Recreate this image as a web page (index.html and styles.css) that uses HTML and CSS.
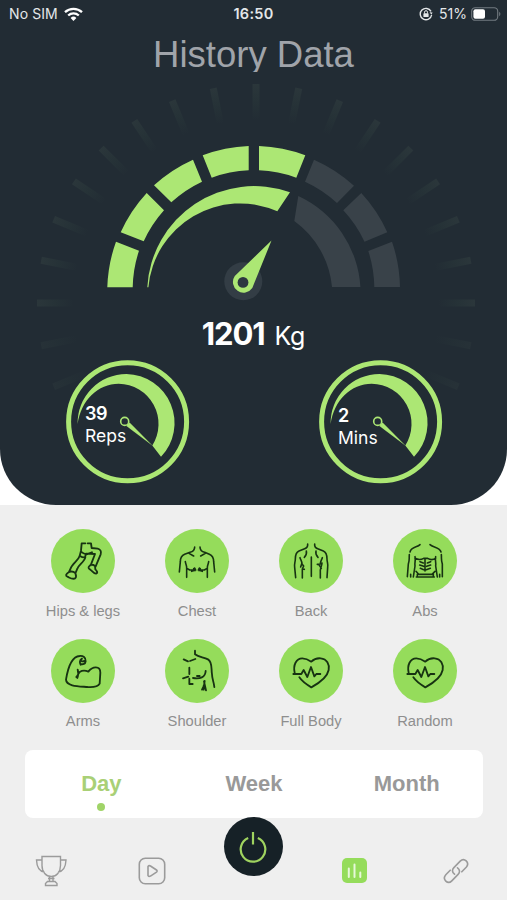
FILE: index.html
```html
<!DOCTYPE html>
<html lang="en">
<head>
  <meta charset="UTF-8">
  <meta name="viewport" content="width=device-width, initial-scale=1.0">
  <title>History Data</title>
  <link rel="stylesheet" href="styles.css">
</head>
<body>
  <section class="hero">
    <svg class="ticks" viewBox="0 0 507 505">
      <defs>
        <linearGradient id="tickFade" gradientUnits="userSpaceOnUse" x1="36" y1="0" x2="74" y2="0">
          <stop offset="0" stop-color="#2e3a3d"/>
          <stop offset="0.5" stop-color="#273438"/>
          <stop offset="1" stop-color="#222c34"/>
        </linearGradient>
      </defs>
      <g id="ticks"></g>
    </svg>

    <header class="status">
      <div class="status-left">
        <span>No SIM</span>
        <svg width="19" height="14" viewBox="0 0 19 14" fill="none" stroke="#fff" stroke-width="2.3">
          <path d="M1 5.2a12.4 12.4 0 0 1 17 0"/>
          <path d="M4.2 8.5a7.8 7.8 0 0 1 10.6 0"/>
          <path d="M6.6 10.9a4.2 4.2 0 0 1 5.8 0L9.5 13.9z" fill="#fff" stroke="none"/>
        </svg>
      </div>
      <div class="status-time">16:50</div>
      <div class="status-right">
        <svg class="lock" width="14" height="14" viewBox="0 0 14 14" fill="none" stroke="#e4e7e9" stroke-width="1.4">
          <path d="M12 4.4a5.7 5.7 0 1 0 .6 3.6"/>
          <path d="M10.6 5.2l3 .4-1.2 2.2z" fill="#e4e7e9" stroke="none"/>
          <rect x="4.4" y="6.3" width="5.2" height="3.8" rx=".6" fill="#e4e7e9" stroke="none"/>
          <path d="M5.5 6.5V5.2a1.5 1.5 0 0 1 3 0v1.3" stroke-width="1"/>
        </svg>
        <span>51%</span>
        <svg width="30" height="14" viewBox="0 0 30 14">
          <rect x=".7" y=".7" width="26" height="12.6" rx="3.6" fill="none" stroke="#727a80" stroke-width="1.1"/>
          <rect x="2.4" y="2.3" width="11.6" height="9.4" rx="2" fill="#fff"/>
          <path d="M28.2 4.8c1.6.7 1.6 3.7 0 4.4z" fill="#727a80"/>
        </svg>
      </div>
    </header>

    <h1>History Data</h1>

    <svg class="gauge" viewBox="100 140 308 170">
      <g fill="#ace774">
        <path d="M107.3 287.3H132.7A122 122 0 0 1 139 250.7L116 241.7A147 147 0 0 0 107.3 287.3z"/>
        <path d="M120.7 232.3A147 147 0 0 1 146.7 193L164 210.3A122 122 0 0 0 143.7 241.3z"/>
        <path d="M154 185.3A147 147 0 0 1 193 159.7L202 181.7A122 122 0 0 0 171.3 202.3z"/>
        <path d="M202.7 155.3A147 147 0 0 1 248.7 146V170.3A122 122 0 0 0 211.7 177.7z"/>
        <path d="M305.3 155.3A147 147 0 0 0 259 146V170.3A122 122 0 0 1 296.3 177.7z"/>
        <path d="M147.3 287.3A107 107 0 0 1 290 192.3L277.3 211.3A92 92 0 0 0 148.4 287.3z"/>
      </g>
      <g fill="#394249">
        <path d="M314 159.7A147 147 0 0 1 354 185.8L337 203A122 122 0 0 0 305 181.7z"/>
        <path d="M361.3 193A147 147 0 0 1 387.3 232.3L364.5 241.7A122 122 0 0 0 343.3 210.3z"/>
        <path d="M392 241.7A147 147 0 0 1 400 287H374.3A122 122 0 0 0 368.3 251z"/>
        <path d="M298.3 196A107 107 0 0 1 360.4 287H332A92 92 0 0 0 294.3 221z"/>
      </g>
      <circle cx="243.3" cy="281.3" r="19" fill="#333d45"/>
      <path d="M271.5 240.5L234.8 276A10.6 10.6 0 1 0 252.3 288z" fill="#ace774"/>
      <circle cx="243" cy="282.4" r="5.4" fill="#2d3840"/>
    </svg>

    <div class="weight"><b>1201</b><span>Kg</span></div>

    <div class="dials">
      <div class="dial">
        <svg viewBox="65 359 125 125">
          <g id="dial">
            <circle cx="127.6" cy="421.8" r="59" fill="none" stroke="#ace774" stroke-width="5"/>
            <path d="M77.6 424A49 49 0 0 1 126.5 374A49 49 0 0 1 161 456.8L152.3 445.5A40.3 40.3 0 0 0 118.7 383.7C98 383.7 81 400 77.6 424z" fill="#ace774"/>
            <path d="M152.6 445.8L126.4 426 129.6 422.4z" fill="#ace774"/>
            <circle cx="124.7" cy="421.4" r="4" fill="#222c34" stroke="#ace774" stroke-width="1.6"/>
          </g>
        </svg>
        <div class="dial-text"><b>39</b><span>Reps</span></div>
      </div>
      <div class="dial">
        <svg viewBox="65 359 125 125"><use href="#dial"/></svg>
        <div class="dial-text low"><b>2</b><span>Mins</span></div>
      </div>
    </div>
  </section>

  <main>
    <div class="parts">
      <div class="part">
        <svg class="part-icon" viewBox="0 0 192 192">
          <path d="M92 43l-2 22-4 16M94 43h9M110 43h10l2 14 18 2c8 2 12 8 9 17l-15 36M90 68c12 10 20 10 33 2M86 80c6 4 10 6 16 5l3-11 27 1-13 34M86 80c-2 12-22 24-26 36l-6 13M103 85c-3 14-20 22-24 34l-6 14M54 129c-10 6-11 12-5 14 7 3 12 8 22 6 8-4 3-12 2-17-6-5-14-5-19-3zM117 109c-7 6-5 10 1 13 6 4 10 12 17 12 7-3 2-9-2-13l-1-10c-5-4-10-5-15-2z"/>
        </svg>
        <span>Hips &amp; legs</span>
      </div>
      <div class="part">
        <svg class="part-icon thin" viewBox="0 0 192 192">
          <path d="M89 54c0 10-6 14-14 16l-16 6c-9 4-13 12-13 22l-3 31M105 54c0 10 6 14 14 16l14 6c9 4 13 12 13 22l3 31M72 73l14 8M121 73l-14 8M61 98c1 8 4 10 4 18v29M131 98c-1 8-4 10-4 18v29M66 118l8 5h10M126 118l-8 5h-10M80 127l12-4-3-6M112 127l-12-4 3-6M86 119l4 6M106 119l-4 6"/>
        </svg>
        <span>Chest</span>
      </div>
      <div class="part">
        <svg class="part-icon thin" viewBox="0 0 192 192">
          <path d="M86 45c1 10-3 13-11 15l-15 6c-10 4-11 13-11 24 0 9-4 16-2 25l3 31M107 45c-1 10 3 13 11 15l15 6c10 4 11 13 11 24 0 9 4 16 2 25l-2 31M82 66c2 9-1 14-6 19M111 66c-2 9 1 14 6 19M63 86c2 7 6 10 6 19l5 6-4 9v27M130 86c-2 7-6 10-6 19l-9 1M129 102c-1 12-7 17-5 29v16M97 84v58M70 120l6 1M69 102l-4 12M119 106l8 12"/>
        </svg>
        <span>Back</span>
      </div>
      <div class="part">
        <svg class="part-icon thin" viewBox="0 0 192 192">
          <path d="M81 47c-8 8-27 7-30 22M49 77c-1 14 1 17-3 28l-3 38M111 47c8 8 30 8 33 22M145 77c1 14-1 17 3 28v38M66 83c3 10-2 18 0 28l-5 33M128 83c-3 10 2 18 0 28l5 33M66 88c10 5 18 5 26 0h12c8 5 16 5 24 0M69 127l8 9h40l9-9M96 90v36M81 98l10 4M113 98l-10 4M80 108l12 4M113 108l-12 4M82 118l10 4M112 118l-12 4M73 136v8M121 136v8M53 136v8M140 136v8M70 144h54"/>
        </svg>
        <span>Abs</span>
      </div>
      <div class="part">
        <svg class="part-icon" viewBox="0 0 192 192">
          <path d="M79 117c3-9 4-17 1-25M88 75c8 2 15 0 16-8 1-12-8-17-18-16C62 52 50 91 45 122c1 21 42 20 65 22 18 1 32-2 36-10l2-33c0-22-24-19-36-3-9-4-18-4-26 1-4 5-6 11-10 15M89 62c1 6 5 6 12 4M89 77c-4-6-3-14 4-18"/>
        </svg>
        <span>Arms</span>
      </div>
      <div class="part">
        <svg class="part-icon" viewBox="0 0 192 192">
          <path d="M90 35v11c12 9 25 8 39 15 14 8 9 28 12 45 0 14 6 24 7 38M56 61l13 6M75 66l16-6M73 86v19M73 119v16h10M54 118l16-5M84 117c21 3 37-1 38-21M119 126l-2 14-6 12M117 127l6 27M116 140v12M96 111h8"/>
        </svg>
        <span>Shoulder</span>
      </div>
      <div class="part">
        <svg class="part-icon" viewBox="0 0 192 192">
          <g id="heart">
            <path d="M47 101c-5-22 4-43 23-43 13 0 20 5 27 10 8-8 17-11 28-10 19 2 27 18 24 35-4 21-30 40-52 52-14-8-27-17-36-30"/>
            <path d="M43 105h24l7-12 11 21 11-30 10 28 6-7h12"/>
          </g>
        </svg>
        <span>Full Body</span>
      </div>
      <div class="part">
        <svg class="part-icon" viewBox="0 0 192 192"><use href="#heart"/></svg>
        <span>Random</span>
      </div>
    </div>

    <div class="tabs">
      <a class="tab active">Day</a>
      <a class="tab">Week</a>
      <a class="tab">Month</a>
    </div>

    <nav>
      <a>
        <svg width="32" height="32" viewBox="0 0 32 32" fill="none" stroke="#9b9b9b" stroke-width="1.4">
          <path d="M7 1.5h18.5v9c0 6.5-4 11-9.2 11S7 17 7 10.5zM7 5H1.5c.3 7 2.5 11.5 8 12M25.5 5H31c-.3 7-2.5 11.5-8 12M14.5 21.5v5M18 21.5v5M13 23.5h6.5M10.5 30.5v-2l2-2h7.5l2 2v2z"/>
        </svg>
      </a>
      <a>
        <svg width="28" height="28" viewBox="0 0 28 28" fill="none" stroke="#9b9b9b" stroke-width="1.6">
          <rect x="1.3" y="1.3" width="25.4" height="25.4" rx="6"/>
          <path d="M10 9.5v9c.5 1.3 1.5 1 2.5.6l6-4c.8-.6.8-1.500 0-2.100l-6-4c-1-.6-2-.6-2.500.5z"/>
        </svg>
      </a>
      <a class="power">
        <svg width="30" height="34" viewBox="0 0 30 34" fill="none" stroke="#9fd35f" stroke-width="2.2">
          <path d="M10.2 8A12.3 12.3 0 1 0 19.8 8M15 2v12.5"/>
        </svg>
      </a>
      <a>
        <svg width="25" height="25" viewBox="0 0 25 25" stroke="#e6f8d8" stroke-width="2" stroke-linecap="round">
          <rect width="25" height="25" rx="5" fill="#95dc5b" stroke="none"/>
          <path d="M6.8 10.5v8.5M12.5 6.500V19M18.300 14.500V19"/>
        </svg>
      </a>
      <a>
        <svg width="26" height="26" viewBox="0 0 26 26" fill="none" stroke="#9b9b9b" stroke-width="1.6" stroke-linecap="round">
          <path d="M11.5 16.2c-2.6-2-2.6-4.6-.6-6.6l6.3-6.500c4-4 10 1.500 6 6.200l-4.400 4.500"/>
          <path d="M14.5 9.8c2.6 2 2.6 4.600.6 6.600l-6.300 6.500c-4 4-10-1.500-6-6.200l4.400-4.500"/>
        </svg>
      </a>
    </nav>
  </main>

  <script>
    const ticks = document.getElementById('ticks');
    const step = 11.25;

    // faint marks fanned around the gauge, two of them below each end
    for (let i = -2; i <= 18; i++) {
      const tick = document.createElementNS('http://www.w3.org/2000/svg', 'rect');
      tick.setAttribute('x', 37);
      tick.setAttribute('y', 299.5);
      tick.setAttribute('width', 36);
      tick.setAttribute('height', 7);
      tick.setAttribute('fill', 'url(#tickFade)');
      tick.setAttribute('opacity', i < 0 || i > 16 ? 0.4 : 0.75);
      tick.setAttribute('transform', `rotate(${i * step} 256 303)`);
      ticks.appendChild(tick);
    }
  </script>
</body>
</html>
```
FILE: styles.css
```css
* {
  box-sizing: border-box;
}
body {
  margin: 0;
  height: 900px;
  overflow: hidden;
  background: #fff;
  font-family: "Liberation Sans", Arial, sans-serif;
}
svg {
  display: block;
}
.hero {
  position: relative;
  height: 505px;
  background: #222c34;
  border-radius: 0 0 56px 56px;
  color: #fff;
}
.ticks {
  position: absolute;
  top: 0;
  left: 0;
  width: 507px;
  height: 505px;
}

/* status bar */
.status {
  position: relative;
  display: grid;
  grid-template-columns: 1fr auto 1fr;
  align-items: center;
  height: 27px;
  padding: 0 6px 0 9px;
  font-family: Inter, sans-serif;
  font-size: 14px;
  color: #e4e7e9;
}
.status-left, .status-right {
  display: flex;
  align-items: center;
}
.status-left {
  gap: 6px;
  letter-spacing: 0.1px;
}
.status-right {
  justify-content: flex-end;
  gap: 4px;
}
.lock {
  margin-right: 2px;
}
.status-time {
  margin-right: 3px;
  font-weight: 600;
  font-size: 14.5px;
  letter-spacing: 0.3px;
}

h1 {
  position: relative;
  height: 45px;
  margin: 0;
  padding-top: 7px;
  overflow: hidden;
  text-align: center;
  font-size: 36.5px;
  line-height: 41px;
  font-weight: normal;
  color: #a0a4aa;
}
.gauge {
  position: relative;
  width: 308px;
  height: 170px;
  margin: 68px 0 0 100px;
}
.weight {
  position: relative;
  display: flex;
  align-items: baseline;
  justify-content: center;
  gap: 10px;
  height: 49px;
  line-height: 48px;
  font-family: Inter, sans-serif;
}
.weight b {
  font-size: 31px;
  font-weight: 700;
  letter-spacing: -1.1px;
}
.weight span {
  font-size: 25px;
  letter-spacing: -0.3px;
}
.dials {
  display: flex;
  justify-content: space-between;
  padding: 0 64px 0 65px;
}
.dial {
  position: relative;
  width: 125px;
  height: 125px;
}
.dial-text {
  position: absolute;
  left: 20px;
  top: 44px;
  display: flex;
  flex-direction: column;
  font-family: Inter, sans-serif;
  font-size: 18px;
  line-height: 22px;
}
.dial-text.low {
  top: 46px;
}
.dial-text b {
  font-weight: 600;
  letter-spacing: -0.5px;
}
.dial-text span {
  font-size: 17.5px;
}

main {
  height: 395px;
  padding-top: 24px;
  background: #efefef;
}
.parts {
  display: grid;
  grid-template-columns: repeat(4, 114px);
  grid-auto-rows: 110px;
  padding-left: 26px;
}
.part {
  display: flex;
  flex-direction: column;
  align-items: center;
  font-size: 14.7px;
  color: #8e8e8e;
}
.part-icon {
  width: 64px;
  height: 64px;
  margin-bottom: 10px;
  border-radius: 50%;
  background: #95dc5b;
  fill: none;
  stroke: #173312;
  stroke-width: 5.5;
  stroke-linecap: round;
  stroke-linejoin: round;
}
.part-icon.thin {
  stroke-width: 4.8;
}

.tabs {
  display: flex;
  width: 458px;
  height: 68px;
  margin: 1px 0 0 25px;
  border-radius: 8px;
  background: #fff;
}
.tab {
  flex: 1;
  display: flex;
  flex-direction: column;
  align-items: center;
  padding-top: 21px;
  font-size: 22px;
  line-height: 26px;
  font-weight: bold;
  color: #999;
}
.tab.active {
  color: #a9d076;
}
.tab.active::after {
  content: "";
  width: 8px;
  height: 8px;
  margin-top: 6px;
  border-radius: 50%;
  background: #a0d468;
}
nav {
  display: grid;
  grid-template-columns: repeat(5, 1fr);
  align-items: center;
  justify-items: center;
  height: 82px;
  padding-top: 23px;
}
.power {
  position: relative;
  top: -24px;
  display: flex;
  align-items: center;
  justify-content: center;
  width: 59px;
  height: 59px;
  border-radius: 50%;
  background: #162127;
}
```
